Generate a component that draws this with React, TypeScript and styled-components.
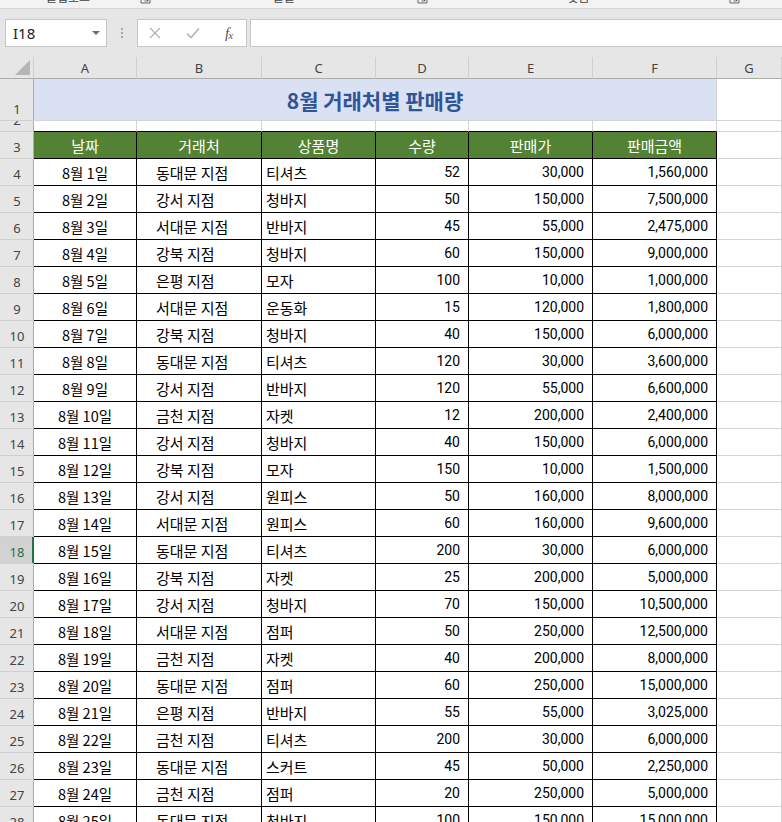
import React from "react";
import styled, { createGlobalStyle, css } from "styled-components";

const GlobalStyle = createGlobalStyle`
  html, body {
    margin: 0;
    padding: 0;
    overflow: hidden;
    background: #fff;
  }
  body {
    font-family: "Noto Sans CJK KR", "Noto Sans", sans-serif;
  }
`;

// window frame

const Window = styled.div`
  width: 782px;
  height: 822px;
  overflow: hidden;
  display: flex;
  flex-direction: column;
`;

// ribbon bottom edge (group captions cut off by the scroll)

const RibbonEdge = styled.div`
  height: 8px;
  flex: none;
  display: flex;
  background: #f3f3f3;
  border-bottom: 1px solid #d5d5d5;
  overflow: hidden;
`;

const RibbonGroup = styled.div<{ $width: number }>`
  width: ${(p) => p.$width}px;
  flex: none;
  display: flex;
  align-items: flex-start;
`;

const GroupLabel = styled.span`
  flex: 1;
  text-align: center;
  font-size: 12px;
  line-height: 12px;
  color: #444;
  margin-top: -9px;
`;

const Launcher = styled.svg`
  width: 11px;
  height: 11px;
  flex: none;
  margin: -7px 4px 0 4px;
`;

// formula bar

const FormulaBand = styled.div`
  height: 48px;
  flex: none;
  box-sizing: border-box;
  padding: 10px 0 10px 5px;
  background: #e6e6e6;
  display: flex;
  align-items: stretch;
`;

const NameBox = styled.div`
  width: 102px;
  box-sizing: border-box;
  background: #fff;
  border: 1px solid #c6c6c6;
  display: flex;
  align-items: center;
  justify-content: space-between;
  padding: 0 6px 0 7px;
  font-family: "Noto Sans", sans-serif;
  font-size: 15px;
  color: #222;
`;

const DropArrow = styled.span`
  width: 0;
  height: 0;
  border-left: 4px solid transparent;
  border-right: 4px solid transparent;
  border-top: 4px solid #6b6b6b;
`;

const Grip = styled.div`
  width: 30px;
  display: flex;
  flex-direction: column;
  align-items: center;
  justify-content: center;
  gap: 2px;
`;

const GripDot = styled.span`
  width: 2px;
  height: 2px;
  background: #a8a8a8;
`;

const FxBox = styled.div`
  width: 110px;
  box-sizing: border-box;
  background: #fff;
  border: 1px solid #c6c6c6;
  display: flex;
  align-items: center;
  padding-left: 11px;
  gap: 25px;
`;

const FxLabel = styled.span`
  font-family: "Liberation Serif", serif;
  font-style: italic;
  font-size: 15px;
  color: #555;
  letter-spacing: -1px;

  sub {
    font-size: 11px;
    vertical-align: -1px;
  }
`;

const FormulaInput = styled.div`
  flex: 1;
  margin-left: 3px;
  background: #fff;
  border: 1px solid #c6c6c6;
  border-right: none;
`;

// sheet grid

const Sheet = styled.div`
  display: grid;
  grid-template-columns: 34px 103px 125px 114px 93px 124px 124px 65px;
  grid-template-rows: 22px 42px 11px;
  grid-auto-rows: 27px;
`;

const Corner = styled.div`
  background: #e6e6e6;
  border-right: 1px solid #d0d0d0;
  border-bottom: 1px solid #ababab;
  display: flex;
  align-items: flex-end;
  justify-content: flex-end;
  padding: 0 3px 3px 0;
`;

const ColHead = styled.div`
  box-sizing: border-box;
  background: #e6e6e6;
  border-right: 1px solid #d0d0d0;
  border-bottom: 1px solid #ababab;
  display: flex;
  align-items: center;
  justify-content: center;
  font-family: "Noto Sans", sans-serif;
  font-size: 13px;
  color: #444;
`;

const RowHead = styled.div<{ $active?: boolean }>`
  box-sizing: border-box;
  background: ${(p) => (p.$active ? "#d2d2d2" : "#e6e6e6")};
  border-bottom: 1px solid #d0d0d0;
  box-shadow: ${(p) =>
    p.$active ? "inset -2px 0 0 #217346" : "inset -1px 0 0 #ababab"};
  display: flex;
  align-items: flex-end;
  justify-content: center;
  padding-bottom: 3px;
  overflow: hidden;
  font-family: "Noto Sans", sans-serif;
  font-size: 13px;
  line-height: 15px;
  color: ${(p) => (p.$active ? "#2f6b46" : "#444")};
`;

type Tone = "plain" | "edge" | "title" | "head" | "data";
type Align = "left" | "center" | "right";

const Cell = styled.div<{
  $tone?: Tone;
  $align?: Align;
  $indent?: number;
  $numeric?: boolean;
  $date?: boolean;
}>`
  box-sizing: border-box;
  display: flex;
  align-items: center;
  white-space: nowrap;
  overflow: hidden;
  font-size: 15px;
  color: #000;
  border-right: 1px solid #d4d4d4;
  border-bottom: 1px solid #d4d4d4;
  justify-content: ${(p) =>
    p.$align === "right" ? "flex-end" : p.$align === "center" ? "center" : "flex-start"};
  padding: ${(p) =>
    p.$align === "right" ? `0 ${p.$indent ?? 8}px 0 0` : `0 0 0 ${p.$indent ?? 0}px`};

  ${(p) =>
    p.$numeric &&
    css`
      font-family: Roboto, "Noto Sans CJK KR", sans-serif;
      font-size: 14px;
    `}

  ${(p) =>
    p.$date &&
    css`
      font-size: 14.5px;
    `}

  ${(p) =>
    p.$tone === "edge" &&
    css`
      border-bottom-color: #000;
    `}

  ${(p) =>
    p.$tone === "title" &&
    css`
      grid-column: span 6;
      background: #d9e1f2;
      color: #305496;
      font-size: 21px;
      font-weight: 700;
    `}

  ${(p) =>
    p.$tone === "head" &&
    css`
      background: #548235;
      color: #fff;
      border-right-color: #000;
      border-bottom-color: #000;
    `}

  ${(p) =>
    p.$tone === "data" &&
    css`
      border-right-color: #000;
      border-bottom-color: #000;
    `}
`;

const columns = ["A", "B", "C", "D", "E", "F", "G"];

const headers = ["날짜", "거래처", "상품명", "수량", "판매가", "판매금액"];

const sales: [number, string, string, number, number][] = [
  [1, "동대문 지점", "티셔츠", 52, 30000],
  [2, "강서 지점", "청바지", 50, 150000],
  [3, "서대문 지점", "반바지", 45, 55000],
  [4, "강북 지점", "청바지", 60, 150000],
  [5, "은평 지점", "모자", 100, 10000],
  [6, "서대문 지점", "운동화", 15, 120000],
  [7, "강북 지점", "청바지", 40, 150000],
  [8, "동대문 지점", "티셔츠", 120, 30000],
  [9, "강서 지점", "반바지", 120, 55000],
  [10, "금천 지점", "자켓", 12, 200000],
  [11, "강서 지점", "청바지", 40, 150000],
  [12, "강북 지점", "모자", 150, 10000],
  [13, "강서 지점", "원피스", 50, 160000],
  [14, "서대문 지점", "원피스", 60, 160000],
  [15, "동대문 지점", "티셔츠", 200, 30000],
  [16, "강북 지점", "자켓", 25, 200000],
  [17, "강서 지점", "청바지", 70, 150000],
  [18, "서대문 지점", "점퍼", 50, 250000],
  [19, "금천 지점", "자켓", 40, 200000],
  [20, "동대문 지점", "점퍼", 60, 250000],
  [21, "은평 지점", "반바지", 55, 55000],
  [22, "금천 지점", "티셔츠", 200, 30000],
  [23, "동대문 지점", "스커트", 45, 50000],
  [24, "금천 지점", "점퍼", 20, 250000],
  [25, "동대문 지점", "청바지", 100, 150000],
];

const fmt = (n: number) => n.toLocaleString("en-US");

const LauncherIcon = () => (
  <Launcher viewBox="0 0 11 11">
    <path d="M1 1h9v9H1z" fill="none" stroke="#666" strokeWidth="1" />
    <path d="M3 3l5 5M8 4.5V8H4.5" fill="none" stroke="#666" strokeWidth="1" />
  </Launcher>
);

export default function App() {
  const activeRow = 18;

  return (
    <Window>
      <GlobalStyle />

      <RibbonEdge>
        <RibbonGroup $width={155}>
          <GroupLabel>클립보드</GroupLabel>
          <LauncherIcon />
        </RibbonGroup>
        <RibbonGroup $width={277}>
          <GroupLabel>글꼴</GroupLabel>
          <LauncherIcon />
        </RibbonGroup>
        <RibbonGroup $width={312}>
          <GroupLabel>맞춤</GroupLabel>
          <LauncherIcon />
        </RibbonGroup>
      </RibbonEdge>

      <FormulaBand>
        <NameBox>
          I18
          <DropArrow />
        </NameBox>
        <Grip>
          <GripDot />
          <GripDot />
          <GripDot />
        </Grip>
        <FxBox>
          <svg width="12" height="12" viewBox="0 0 12 12">
            <path d="M1 1l10 10M11 1L1 11" stroke="#b4b4b4" strokeWidth="1.4" />
          </svg>
          <svg width="14" height="12" viewBox="0 0 14 12">
            <path d="M1 6.5l4 4L13 1.5" fill="none" stroke="#b4b4b4" strokeWidth="1.6" />
          </svg>
          <FxLabel>
            f<sub>x</sub>
          </FxLabel>
        </FxBox>
        <FormulaInput />
      </FormulaBand>

      <Sheet>
        <Corner>
          <svg width="15" height="15" viewBox="0 0 15 15">
            <path d="M15 0V15H0z" fill="#b5b5b5" />
          </svg>
        </Corner>
        {columns.map((c) => (
          <ColHead key={c}>{c}</ColHead>
        ))}

        <RowHead>1</RowHead>
        <Cell $tone="title" $align="center">
          8월 거래처별 판매량
        </Cell>
        <Cell />

        <RowHead>2</RowHead>
        {headers.map((h) => (
          <Cell key={h} $tone="edge" />
        ))}
        <Cell />

        <RowHead>3</RowHead>
        {headers.map((h) => (
          <Cell key={h} $tone="head" $align="center">
            {h}
          </Cell>
        ))}
        <Cell />

        {sales.map(([day, shop, item, qty, price], i) => {
          const row = i + 4;
          return (
            <React.Fragment key={row}>
              <RowHead $active={row === activeRow}>{row}</RowHead>
              <Cell $tone="data" $align="center" $date>
                8월 {day}일
              </Cell>
              <Cell $tone="data" $indent={19}>
                {shop}
              </Cell>
              <Cell $tone="data" $indent={4}>
                {item}
              </Cell>
              <Cell $tone="data" $align="right" $numeric>
                {qty}
              </Cell>
              <Cell $tone="data" $align="right" $numeric>
                {fmt(price)}
              </Cell>
              <Cell $tone="data" $align="right" $numeric>
                {fmt(qty * price)}
              </Cell>
              <Cell />
            </React.Fragment>
          );
        })}
      </Sheet>
    </Window>
  );
}
